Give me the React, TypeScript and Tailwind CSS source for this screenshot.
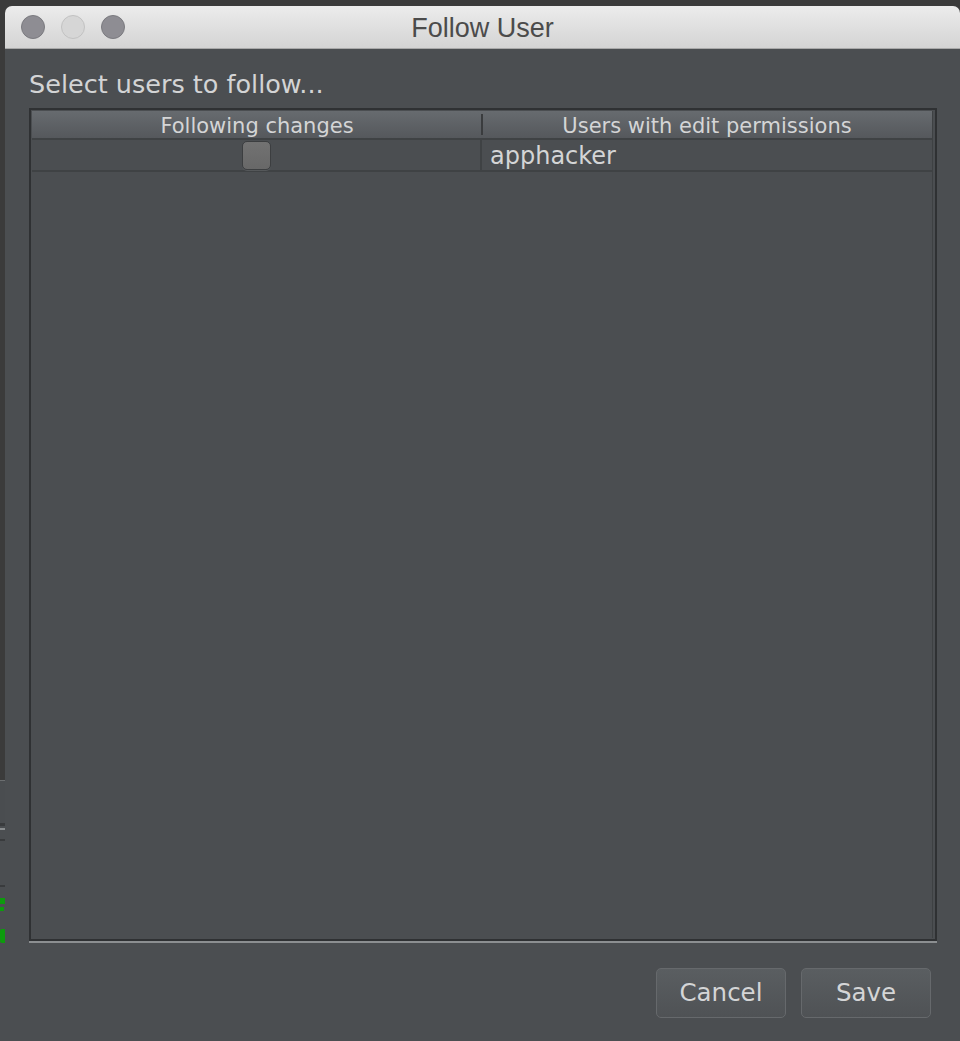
import React, { useState } from 'react';

const UI_FONT = "font-['DejaVu_Sans',_'Liberation_Sans',_sans-serif]";

const TrafficLight: React.FC<{ dim?: boolean }> = ({ dim = false }) => (
  <span
    className={`h-[24px] w-[24px] rounded-full border ${
      dim ? 'border-[#c2c2c2] bg-[#d6d6d6]' : 'border-[#7a7a7f] bg-[#8e8d93]'
    }`}
  />
);

// strip of the IDE window peeking out on the left edge
const BehindStrip: React.FC = () => (
  <div className="flex w-[5px] shrink-0 flex-col">
    <div className="h-[774px] bg-[#3b3b3b]" />
    <div className="h-[1px] bg-[#6b6e70]" />
    <div className="h-[42px] bg-[#4a4d50]" />
    <div className="h-[3px] bg-[#393b3d]" />
    <div className="h-[2px] bg-[#4a4d50]" />
    <div className="h-[2px] bg-[#8a8d8f]" />
    <div className="h-[9px] bg-[#4b4e51]" />
    <div className="h-[2px] bg-[#393b3d]" />
    <div className="h-[44px] bg-[#4b4e51]" />
    <div className="h-[2px] bg-[#393b3d]" />
    <div className="h-[11px] bg-[#4b4e51]" />
    <div className="h-[15px] bg-[#4b4e51]">
      <div className="h-[6px] w-[5px] bg-[#0d9b0d]" />
      <div className="mt-[3px] h-[4px] w-[4px] bg-[#0d9b0d]" />
    </div>
    <div className="h-[16px] bg-[#4b4e51]" />
    <div className="h-[14px] bg-[#4b4e51]">
      <div className="h-[14px] w-[5px] rounded-l-[2px] bg-[#0d9b0d]" />
    </div>
    <div className="flex-1 bg-[#4b4e51]" />
  </div>
);

const Checkbox: React.FC = () => {
  const [checked, setChecked] = useState(false);
  return (
    <button
      type="button"
      onClick={() => setChecked((c) => !c)}
      className="ml-[1px] flex h-[29px] w-[29px] items-center justify-center rounded-[5px] border border-[#3c3e40] bg-gradient-to-b from-[#727272] to-[#686868] shadow-[0_1px_0_#55585a]"
    >
      {checked && <span className="text-[18px] leading-none text-[#d6d6d6]">✓</span>}
    </button>
  );
};

const DialogButton: React.FC<{ label: string }> = ({ label }) => (
  <button
    type="button"
    className={`${UI_FONT} h-[50px] w-[130px] rounded-[5px] border border-[#66696c] bg-gradient-to-b from-[#5a5e61] to-[#4f5255] text-[24.5px] leading-none text-[#d4d5d6]`}
  >
    {label}
  </button>
);

export default function App() {
  return (
    <div className="flex h-[1041px] w-[960px] flex-col overflow-hidden bg-[#3b3b3b]">
      <div className="h-[6px] shrink-0" />
      <div className="flex min-h-0 flex-1">
        <BehindStrip />

        <div className="flex flex-1 flex-col overflow-hidden rounded-t-[7px]">
          {/* title bar */}
          <div className="relative flex h-[43px] shrink-0 items-center border-b border-[#a9a9a9] bg-gradient-to-b from-[#ececec] to-[#d4d4d4]">
            <div className="flex items-center gap-[16px] pl-[16px]">
              <TrafficLight />
              <TrafficLight dim />
              <TrafficLight />
            </div>
            <div className="pointer-events-none absolute inset-0 flex items-center justify-center pt-[2px] font-['Liberation_Sans',_Arial,_sans-serif] text-[27px] text-[#4b4b4b]">
              Follow User
            </div>
          </div>

          {/* body */}
          <div className={`${UI_FONT} flex min-h-0 flex-1 flex-col bg-[#4b4e51] pl-[24px] pr-[23px]`}>
            <div className="h-[59px] shrink-0 pt-[20px] text-[25.5px] leading-[30px] text-[#d3d4d5]">
              Select users to follow...
            </div>

            <div className="flex h-[833px] shrink-0 flex-col border-2 border-[#2f3133] p-[1px] pr-[2px]">
              <div className="flex flex-1 flex-col border-r border-[#3e4143] bg-[#4b4e51]">
                {/* header */}
                <div className="grid h-[29px] shrink-0 grid-cols-2 border-b-2 border-[#3f4244] bg-gradient-to-b from-[#676b6f] to-[#55585c] text-[21px] leading-none text-[#d4d5d6]">
                  <div className="relative flex items-center justify-center pt-[3px]">
                    Following changes
                    <span className="absolute right-[-1px] top-[3px] h-[21px] w-[2px] bg-[#3a3c3e]" />
                  </div>
                  <div className="flex items-center justify-center pt-[3px]">Users with edit permissions</div>
                </div>

                {/* rows */}
                <div className="grid h-[32px] shrink-0 grid-cols-2 border-b-2 border-[#3f4244]">
                  <div className="flex items-center justify-center border-r-2 border-[#3f4244]">
                    <Checkbox />
                  </div>
                  <div className="flex items-center pl-[8px] pt-[2px] text-[24px] leading-none text-[#d4d5d6]">
                    apphacker
                  </div>
                </div>
                <div className="flex-1" />
              </div>
            </div>
            <div className="h-[2px] shrink-0 bg-[#8c8f91]" />

            <div className="flex flex-1 items-start justify-end gap-[15px] pr-[6px] pt-[25px]">
              <DialogButton label="Cancel" />
              <DialogButton label="Save" />
            </div>
          </div>
        </div>
      </div>
    </div>
  );
}
